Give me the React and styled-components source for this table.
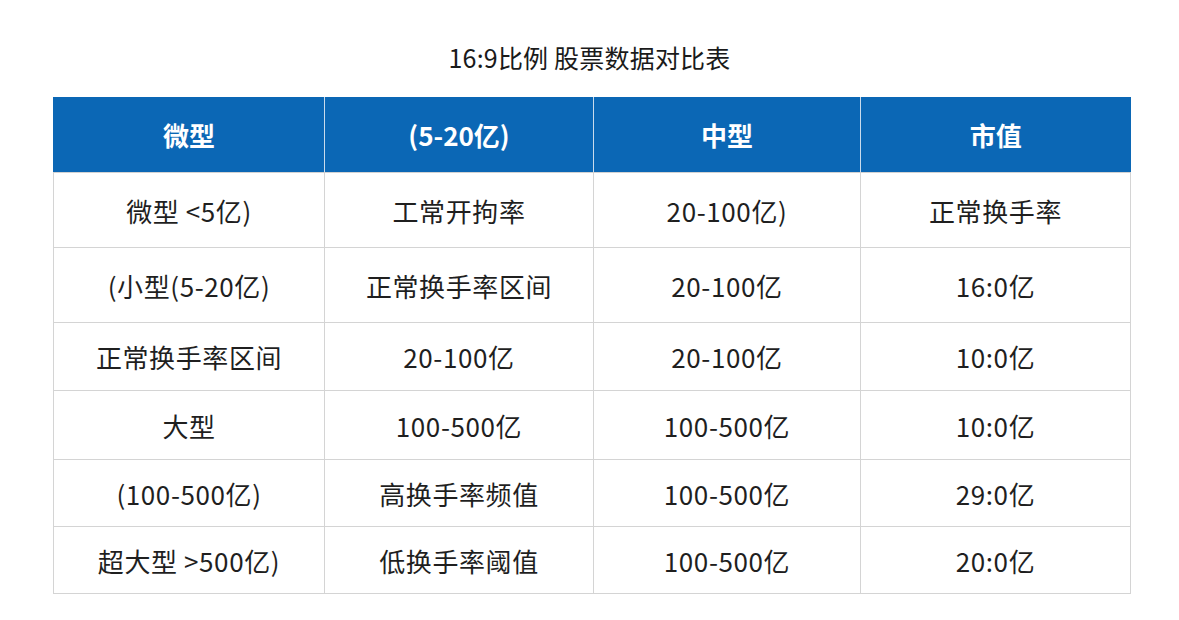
import React from 'react';
import styled, { createGlobalStyle } from 'styled-components';

const GlobalStyle = createGlobalStyle`
  html, body {
    margin: 0;
    padding: 0;
    background: #ffffff;
  }
  body {
    font-family: "Noto Sans CJK SC", "Noto Sans", sans-serif;
    color: #1f1f1f;
  }
`;

const columns = [271, 269, 267, 270];

const headers = ['微型', '(5-20亿)', '中型', '市值'];

const rows = [
  { height: 75, cells: ['微型 <5亿)', '工常开拘率', '20-100亿)', '正常换手率'] },
  { height: 75, cells: ['(小型(5-20亿)', '正常换手率区间', '20-100亿', '16:0亿'] },
  { height: 68, cells: ['正常换手率区间', '20-100亿', '20-100亿', '10:0亿'] },
  { height: 69, cells: ['大型', '100-500亿', '100-500亿', '10:0亿'] },
  { height: 67, cells: ['(100-500亿)', '高换手率频值', '100-500亿', '29:0亿'] },
  { height: 67, cells: ['超大型 >500亿)', '低换手率阈值', '100-500亿', '20:0亿'] },
];

const App = () => {
  return (
    <Page>
      <GlobalStyle />
      <Title>16:9比例 股票数据对比表</Title>
      <Table>
        <colgroup>
          {columns.map((w, i) => (
            <col key={i} style={{ width: w }} />
          ))}
        </colgroup>
        <thead>
          <tr>
            {headers.map((h, i) => (
              <HeadCell key={i}>{h}</HeadCell>
            ))}
          </tr>
        </thead>
        <tbody>
          {rows.map((row, r) => (
            <Row key={r} $height={row.height}>
              {row.cells.map((c, i) => (
                <Cell key={i}>{c}</Cell>
              ))}
            </Row>
          ))}
        </tbody>
      </Table>
    </Page>
  );
};

const Page = styled.div`
  width: 1179px;
  height: 620px;
  background: #ffffff;
  overflow: hidden;
`;

const Title = styled.h1`
  margin: 0;
  padding-top: 40px;
  height: 57px;
  line-height: 34px;
  text-align: center;
  font-size: 25px;
  font-weight: 400;
  color: #1a1a1a;
  letter-spacing: 0.2px;
`;

const Table = styled.table`
  margin-left: 53px;
  width: 1077px;
  border-collapse: collapse;
  table-layout: fixed;
`;

const HeadCell = styled.th`
  height: 75px;
  padding: 0;
  background: #0b67b5;
  color: #ffffff;
  font-size: 26px;
  font-weight: 700;
  text-align: center;
  vertical-align: middle;
  border-left: 1px solid #c9dbec;
  border-bottom: 1px solid #d2d2d2;

  &:first-child {
    border-left: 1px solid #0b67b5;
  }
`;

const Row = styled.tr`
  height: ${props => props.$height}px;
`;

const Cell = styled.td`
  padding: 0;
  text-align: center;
  vertical-align: middle;
  font-size: 26px;
  font-weight: 400;
  letter-spacing: 0.6px;
  color: #1f1f1f;
  border: 1px solid #d4d4d4;
  white-space: nowrap;
`;

export default App;
